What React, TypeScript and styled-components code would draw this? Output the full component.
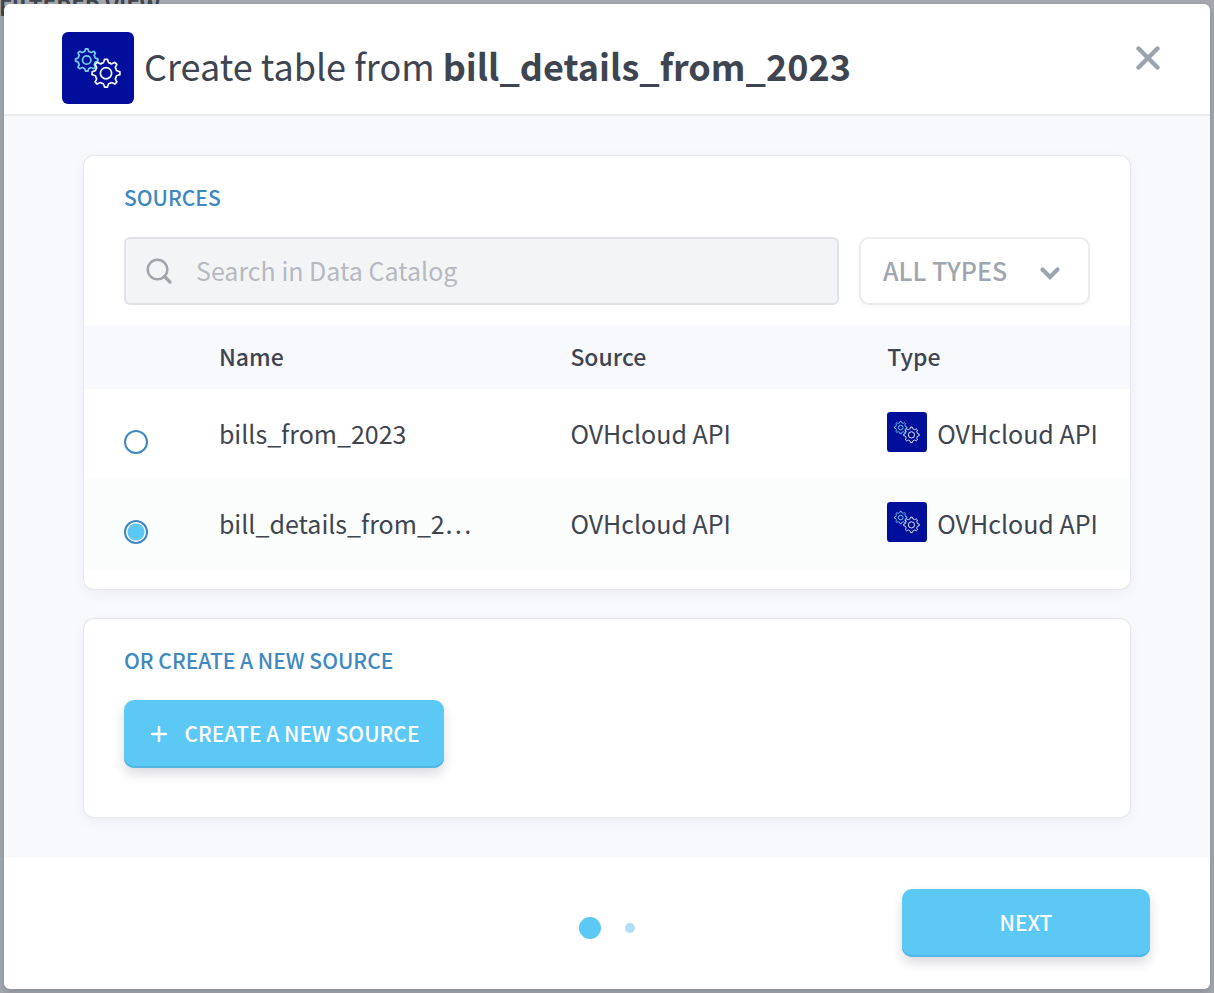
import React, { useState } from "react";
import styled, { createGlobalStyle } from "styled-components";

const GlobalStyle = createGlobalStyle`
  *, *::before, *::after { box-sizing: border-box; }
  body {
    margin: 0;
    background: #a4a8ae;
    color: #3e4550;
    font-family: "Source Sans Pro", "Noto Sans CJK SC", "Noto Sans", sans-serif;
    font-size: 25px;
    line-height: 36px;
  }
  button, input, select { font: inherit; }
`;

const Page = styled.main`
  min-height: 100vh;
  overflow: hidden;
`;

const PageHeading = styled.p`
  margin: -9px 0 0 -1px;
  font-size: 22px;
  font-weight: 700;
  line-height: 30px;
  color: #40454e;
`;

const Backdrop = styled.div`
  position: absolute;
  inset: 0;
  padding: 4px;
  display: flex;
  flex-direction: column;
`;

const Dialog = styled.section`
  flex: 1 0 auto;
  display: flex;
  flex-direction: column;
  background: #fff;
  border-radius: 6px;
  box-shadow: 0 4px 8px rgba(30, 40, 60, 0.2);
`;

const Header = styled.header`
  display: flex;
  align-items: flex-start;
  gap: 10px;
  padding: 28px 50px 10px 58px;
  border-bottom: 2px solid #e9ebef;
`;

const Title = styled.h1`
  flex: 1;
  margin: 0;
  font-size: 36px;
  font-weight: 400;
  line-height: 66px;
`;

const CloseButton = styled.button`
  display: flex;
  margin-top: 14px;
  padding: 0;
  border: 0;
  background: none;
  cursor: pointer;
`;

const Body = styled.div`
  flex: 1;
  display: flex;
  flex-direction: column;
  gap: 30px;
  padding: 40px 80px;
  background: #f7f9fd;
`;

const Card = styled.section<{ $bottom: number }>`
  padding: 28px 0 ${(p) => p.$bottom}px;
  background: #fff;
  border-radius: 10px;
  box-shadow: 0 0 0 1px #e6e8ec, 0 4px 14px rgba(30, 40, 60, 0.06);
`;

const CardTitle = styled.h2`
  margin: 0;
  padding: 0 40px;
  font-size: 21px;
  font-weight: 500;
  line-height: 26px;
  color: #4088c0;
`;

const Filters = styled.div`
  display: flex;
  gap: 20px;
  padding: 27px 40px 20px;
`;

const SearchBox = styled.label`
  flex: 1;
  display: flex;
  align-items: center;
  gap: 24px;
  height: 68px;
  padding: 0 20px;
  border: 2px solid #e0e2e8;
  border-radius: 6px;
  background: #f3f4f6;
`;

const SearchInput = styled.input`
  flex: 1;
  min-width: 0;
  padding: 0 0 2px;
  border: 0;
  outline: 0;
  background: none;
  color: #3e4550;
  &::placeholder { color: #b6b9c0; opacity: 1; }
`;

const SelectBox = styled.div`
  display: grid;
  align-items: center;
  width: 231px;
  & > * { grid-area: 1 / 1; }
  & > svg { justify-self: end; margin: 4px 29px 0 0; pointer-events: none; }
`;

const Select = styled.select`
  appearance: none;
  width: 100%;
  height: 68px;
  padding: 0 22px 2px;
  border: 2px solid #ebecee;
  border-radius: 10px;
  background: #fff;
  box-shadow: 0 2px 4px rgba(30, 40, 60, 0.04);
  color: #a0a5ad;
  font-weight: 500;
`;

const Table = styled.table`
  width: 100%;
  table-layout: fixed;
  border-collapse: collapse;
`;

const Col = styled.col<{ $width: string }>`
  width: ${(p) => p.$width};
`;

const HeadCell = styled.th`
  height: 64px;
  padding: 0 0 2px;
  background: #f7f9fd;
  text-align: left;
  font-size: 23px;
  font-weight: 500;
`;

const Row = styled.tr<{ $selected: boolean }>`
  height: 90px;
  background: ${(p) => (p.$selected ? "#fbfdfd" : "#fff")};
`;

const Cell = styled.td`
  padding: 0 0 2px;
  white-space: nowrap;
`;

const RadioCell = styled(Cell)`
  padding: 16px 0 0 40px;
`;

const Radio = styled.input`
  appearance: none;
  display: block;
  width: 24px;
  height: 24px;
  margin: 0;
  border: 2px solid #4088c0;
  border-radius: 50%;
  background: #fff;
  &:checked { background: radial-gradient(circle, #5bc8f5 8px, #fff 9px); }
`;

const TypeLabel = styled.div`
  display: flex;
  align-items: flex-start;
  gap: 10px;
`;

const Text = styled.span`
  display: block;
`;

const TypeText = styled(Text)`
  line-height: 42px;
`;

const Button = styled.button<{ $inset?: boolean }>`
  display: flex;
  align-items: center;
  justify-content: center;
  gap: 16px;
  height: 68px;
  margin: ${(p) => (p.$inset ? "27px 40px 0" : "0")};
  width: ${(p) => (p.$inset ? "320px" : "248px")};
  padding: 0 0 2px;
  border: 0;
  border-radius: 10px;
  background: #5bc8f5;
  box-shadow: inset 0 -2px 0 #52b6e2, 0 6px 12px rgba(30, 30, 60, 0.16);
  color: #fff;
  font-size: 21px;
  font-weight: 500;
  cursor: pointer;
  & > svg { margin-top: 2px; }
`;

const Footer = styled.footer`
  display: grid;
  grid-template-columns: 1fr auto 1fr;
  align-items: center;
  padding: 32px 60px;
`;

const Steps = styled.div`
  grid-column: 2;
  display: flex;
  align-items: center;
  gap: 24px;
  padding-top: 10px;
`;

const Step = styled.span<{ $active?: boolean }>`
  width: ${(p) => (p.$active ? 22 : 10)}px;
  height: ${(p) => (p.$active ? 22 : 10)}px;
  border-radius: 50%;
  background: ${(p) => (p.$active ? "#5bc8f5" : "#b0def4")};
`;

const Next = styled.div`
  justify-self: end;
`;

const IconSvg = styled.svg`
  flex: none;
  display: block;
`;

/* Outline of an eight-toothed gear with scalloped gaps between the teeth. */
function gearPath(cx: number, cy: number, r: number): string {
  const at = (radius: number, deg: number) => {
    const a = ((deg - 90) * Math.PI) / 180;
    return `${(cx + radius * Math.cos(a)).toFixed(2)} ${(cy + radius * Math.sin(a)).toFixed(2)}`;
  };
  let d = "";
  for (let k = 0; k < 8; k++) {
    const a = k * 45;
    d += `${k ? "L" : "M"}${at(r, a - 6)}L${at(r, a + 6)}L${at(r * 0.86, a + 10)}`;
    d += `Q${at(r * 0.72, a + 15)} ${at(r * 0.79, a + 22.5)}Q${at(r * 0.72, a + 30)} ${at(r * 0.86, a + 35)}`;
  }
  return d + "Z";
}

function GearsIcon({ size }: { size: number }) {
  return (
    <IconSvg width={size} height={size} viewBox="0 0 72 72" aria-hidden="true">
      <rect width="72" height="72" rx="6" fill="#000e9c" />
      <g fill="none" strokeWidth="1.7" strokeLinejoin="round">
        <path d={gearPath(24.7, 28, 11.2)} stroke="#78cdec" />
        <circle cx="24.7" cy="28" r="4.2" stroke="#78cdec" />
        <path d={gearPath(44, 41.2, 14)} stroke="#f2f6f4" fill="#000e9c" />
        <circle cx="44" cy="41.2" r="5.6" stroke="#f2f6f4" />
      </g>
    </IconSvg>
  );
}

const sources = ["bills_from_2023", "bill_details_from_2…"];

export default function App() {
  const [selected, setSelected] = useState(1);
  return (
    <Page>
      <GlobalStyle />
      <PageHeading>FILTERED VIEW</PageHeading>
      <Backdrop>
        <Dialog role="dialog" aria-labelledby="dialog-title">
          <Header>
            <GearsIcon size={72} />
            <Title id="dialog-title">
              Create table from <b>bill_details_from_2023</b>
            </Title>
            <CloseButton type="button" aria-label="Close">
              <IconSvg width="24" height="24" viewBox="0 0 24 24">
                <path d="M2.5 2.5L21.5 21.5M21.5 2.5L2.5 21.5" stroke="#9ba4ae" strokeWidth="4.4" strokeLinecap="round" />
              </IconSvg>
            </CloseButton>
          </Header>
          <Body>
            <Card $bottom={20}>
              <CardTitle>SOURCES</CardTitle>
              <Filters>
                <SearchBox>
                  <IconSvg width="26" height="26" viewBox="0 0 26 26" fill="none" stroke="#a0a4ab" strokeWidth="2.4">
                    <circle cx="11.5" cy="11.5" r="9.8" />
                    <path d="M18.5 18.5L24 24" strokeWidth="3.2" strokeLinecap="round" />
                  </IconSvg>
                  <SearchInput type="text" aria-label="Search in Data Catalog" placeholder="Search in Data Catalog" />
                </SearchBox>
                <SelectBox>
                  <Select aria-label="Type">
                    <option>ALL TYPES</option>
                  </Select>
                  <IconSvg width="22" height="16" viewBox="0 0 22 16" fill="none">
                    <path d="M3.5 4.5L11 12L18.5 4.5" stroke="#9ba4ae" strokeWidth="4.2" strokeLinecap="round" />
                  </IconSvg>
                </SelectBox>
              </Filters>
              <Table>
                <colgroup>
                  <Col $width="12.9%" />
                  <Col $width="33.6%" />
                  <Col $width="30.3%" />
                  <Col $width="auto" />
                </colgroup>
                <thead>
                  <tr>
                    <HeadCell aria-label="Selection" />
                    <HeadCell>Name</HeadCell>
                    <HeadCell>Source</HeadCell>
                    <HeadCell>Type</HeadCell>
                  </tr>
                </thead>
                <tbody>
                  {sources.map((name, i) => (
                    <Row key={name} $selected={selected === i}>
                      <RadioCell>
                        <Radio
                          type="radio"
                          name="source"
                          aria-label={name}
                          checked={selected === i}
                          onChange={() => setSelected(i)}
                        />
                      </RadioCell>
                      <Cell><Text>{name}</Text></Cell>
                      <Cell><Text>OVHcloud API</Text></Cell>
                      <Cell>
                        <TypeLabel>
                          <GearsIcon size={40} />
                          <TypeText>OVHcloud API</TypeText>
                        </TypeLabel>
                      </Cell>
                    </Row>
                  ))}
                </tbody>
              </Table>
            </Card>
            <Card $bottom={49}>
              <CardTitle>OR CREATE A NEW SOURCE</CardTitle>
              <Button type="button" $inset>
                <IconSvg width="20" height="20" viewBox="0 0 20 20" fill="none">
                  <path d="M10 3V17M3 10H17" stroke="#fff" strokeWidth="2.6" strokeLinecap="round" />
                </IconSvg>
                CREATE A NEW SOURCE
              </Button>
            </Card>
          </Body>
          <Footer>
            <Steps>
              <Step $active />
              <Step />
            </Steps>
            <Next>
              <Button type="button">NEXT</Button>
            </Next>
          </Footer>
        </Dialog>
      </Backdrop>
    </Page>
  );
}
